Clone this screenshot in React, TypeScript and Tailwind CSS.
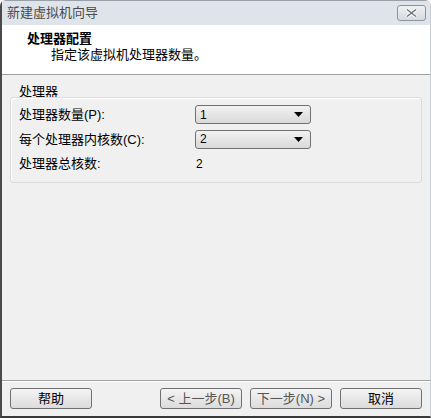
const FONT = "font-['Liberation_Sans','Noto_Sans_CJK_SC',sans-serif]";

function Combo({ value }: { value: string }) {
  return (
    <div className="flex h-[19px] w-[116px] items-center justify-between rounded-[3px] border border-[#707070] bg-gradient-to-b from-[#f2f2f2] to-[#d9d9d9] pl-[4px] pr-[7px] text-[12px] text-black">
      <span>{value}</span>
      <svg width="9" height="5" viewBox="0 0 9 5">
        <path d="M0 0h9L4.5 5z" fill="#000" />
      </svg>
    </div>
  );
}

function Btn({ label, disabled }: { label: string; disabled?: boolean }) {
  return (
    <div
      className={`flex h-[21px] w-[82px] items-center justify-center rounded-[3px] border border-[#707070] bg-gradient-to-b from-[#f4f4f4] to-[#dcdcdc] text-[13px] ${disabled ? "text-[#555]" : "text-black"}`}
    >
      {label}
    </div>
  );
}

export default function App() {
  return (
    <div className={`${FONT} h-[418px] w-[431px] overflow-hidden`}>
      <div className="flex h-full flex-col rounded-tl-[6px] rounded-tr-[6px] border-b-[2px] border-l-[2px] border-r border-t border-b-[#3a3a3a] border-l-[#4a4a4a] border-r-[#c8cdd3] border-t-[#9aa0a8] bg-[#f0f0f0]">
        {/* title bar */}
        <div className="flex h-[24px] items-center justify-between bg-[#dfe4ea] pl-[5px] pr-[4px]">
          <span className="text-[13px] text-[#4a4a4a]">新建虚拟机向导</span>
          <div className="flex h-[16px] w-[29px] items-center justify-center rounded-[3px] border border-[#8c929a] bg-gradient-to-b from-[#eef1f4] to-[#d6dbe1]">
            <svg width="15" height="10" viewBox="0 0 15 10">
              <path d="M3 1.5l9 7M12 1.5l-9 7" stroke="#fff" strokeWidth="3.4" />
              <path d="M3 1.5l9 7M12 1.5l-9 7" stroke="#6a7078" strokeWidth="1.4" />
            </svg>
          </div>
        </div>

        {/* header */}
        <div className="flex h-[50px] flex-col border-b border-b-[#a0a0a0] bg-white pl-[25px] pt-[6px]">
          <span className="text-[13px] font-bold leading-[16px] text-black">处理器配置</span>
          <span className="pl-[24px] text-[13px] leading-[16px] text-black">指定该虚拟机处理器数量。</span>
        </div>

        {/* content */}
        <div className="flex flex-1 flex-col px-[8px] pt-[10px]">
          <span className="pl-[9px] text-[13px] leading-[14px] text-black">处理器</span>
          <div className="-mt-[2px] flex flex-col gap-[5px] rounded-[3px] border border-[#dcdcdc] pb-[9px] pl-[8px] pt-[7px] shadow-[inset_1px_1px_0_#fff]">
            <div className="flex items-center">
              <span className="w-[176px] text-[13px] text-black">处理器数量(P):</span>
              <Combo value="1" />
            </div>
            <div className="flex items-center">
              <span className="w-[176px] text-[13px] text-black">每个处理器内核数(C):</span>
              <Combo value="2" />
            </div>
            <div className="flex h-[19px] items-center">
              <span className="w-[176px] text-[13px] text-black">处理器总核数:</span>
              <span className="pl-[1px] text-[12px] text-black">2</span>
            </div>
          </div>
        </div>

        {/* footer */}
        <div className="flex h-[36px] items-start border-t border-t-[#a0a0a0] px-[8px] pt-[7px] shadow-[inset_0_1px_0_#fff]">
          <Btn label="帮助" />
          <div className="flex-1" />
          <div className="flex gap-[8px]">
            <Btn label="< 上一步(B)" disabled />
            <Btn label="下一步(N) >" disabled />
            <Btn label="取消" />
          </div>
        </div>
      </div>
    </div>
  );
}
